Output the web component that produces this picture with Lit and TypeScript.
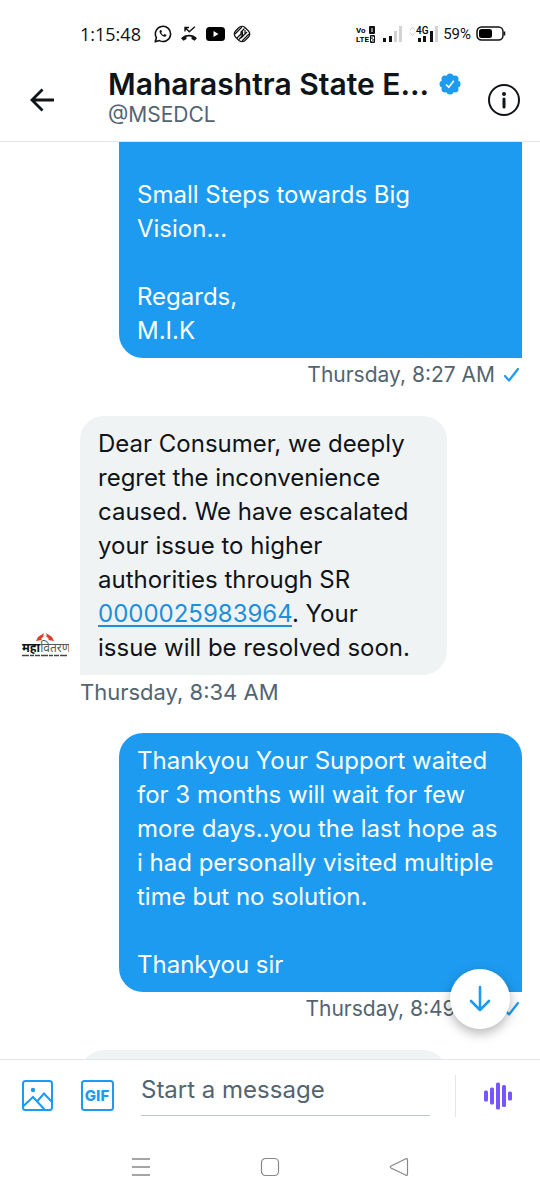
import { LitElement, html, css, svg, nothing } from 'lit';
import { customElement, property, state } from 'lit/decorators.js';
import { classMap } from 'lit/directives/class-map.js';

interface Message {
  own: boolean;
  lines: string[];
  time: string;
}

const MESSAGES: Message[] = [
  {
    own: true,
    lines: ['', 'Small Steps towards Big', 'Vision...', '', 'Regards,', 'M.I.K'],
    time: 'Thursday, 8:27 AM',
  },
  {
    own: false,
    lines: [
      'Dear Consumer, we deeply',
      'regret the inconvenience',
      'caused. We have escalated',
      'your issue to higher',
      'authorities through SR',
      '0000025983964. Your',
      'issue will be resolved soon.',
    ],
    time: 'Thursday, 8:34 AM',
  },
  {
    own: true,
    lines: [
      'Thankyou Your Support waited',
      'for 3 months will wait for few',
      'more days..you the last hope as',
      'i had personally visited multiple',
      'time but no solution.',
      '',
      'Thankyou sir',
    ],
    time: 'Thursday, 8:49 AM',
  },
];

@customElement('status-bar')
class StatusBar extends LitElement {
  static styles = css`
    :host {
      display: flex;
      align-items: center;
      justify-content: space-between;
      height: 68px;
      padding: 0 34px 0 80px;
      box-sizing: border-box;
      font-family: 'Open Sans', sans-serif;
      color: #111;
    }

    .group {
      display: flex;
      align-items: center;
      gap: 8px;
    }

    .group.right {
      gap: 6px;
    }

    .time {
      font-size: 18px;
      margin-right: 5px;
    }

    .percent {
      font-family: Roboto, sans-serif;
      font-size: 15px;
      margin: 0 -1px;
    }

    svg {
      display: block;
    }

    .tiny {
      font: 700 8px Roboto, sans-serif;
    }

    .net {
      font: 500 10px Roboto, sans-serif;
    }
  `;

  render() {
    return html`
      <div class="group">
        <span class="time">1:15:48</span>
        <svg width="18" height="18" viewBox="0 0 18 18" fill="none" stroke="#111" stroke-width="1.6">
          <path d="M1.2 16.8l1.2-4.1a7.6 7.6 0 1 1 3 2.9z" stroke-linejoin="round" />
          <path d="M6 5.2c-1 1-.4 2.8 1.2 4.5s3.6 2.6 4.9 1.5l.4-1.1-1.9-1-1 .9c-1.2-.5-1.9-1.2-2.4-2.3l.8-.9-.8-1.8z" fill="#111" stroke="none" />
        </svg>
        <svg width="18" height="16" viewBox="0 0 18 16" fill="none" stroke="#111">
          <path d="M5 5.5v-4h4M5.3 1.8l4 4 5.5-5" stroke-width="1.4" />
          <path d="M1 12.2c4-4.6 12-4.6 16 0l-2.5 2.6-3-1.9v-2.1a9 9 0 0 0-5 0v2.1l-3 1.9z" fill="#111" stroke="none" />
        </svg>
        <svg width="19" height="14" viewBox="0 0 19 14">
          <rect width="19" height="14" rx="3.5" fill="#000" />
          <path d="M7.5 4v6l5-3z" fill="#fff" />
        </svg>
        <svg width="18" height="18" viewBox="0 0 18 18" fill="none" stroke="#111" stroke-width="1.2">
          <path d="M6 2.5q3-2.5 6 0l3.5 3.5q2.5 3 0 6L12 15.5q-3 2.5-6 0L2.5 12q-2.5-3 0-6z" />
          <path d="M9 2L2 9M11.5 3.5L8 7v3.5M4 13l5.5-5.500v3L6 14.5M12 5v4l2-2M9 16l7-7M12 9l-4 4" />
        </svg>
      </div>
      <div class="group right">
        <svg width="20" height="17" viewBox="0 0 20 17">
          <text class="tiny" x="0" y="7">Vo</text>
          <text class="tiny" x="0" y="16">LTE</text>
          <rect x="13" y="0" width="6" height="8" rx="1" fill="#111" />
          <rect x="14" y="9" width="5" height="8" rx="1" fill="#111" />
          <path d="M16 2v4M15 11h2.5v2h-2v2h2.5" stroke="#fff" fill="none" />
        </svg>
        <svg width="21" height="16" viewBox="0 0 21 16">
          <path d="M1 12h3v4H1zM7 10h3v6H7z" fill="#111" />
          <path d="M12 5h3v11h-3zM17 0h3v16h-3z" fill="#d3d3d3" />
        </svg>
        <svg width="29" height="18" viewBox="0 0 29 18">
          <path d="M1 5l2.5-3L6 5M1 7.5l2.5 3 2.5-3" fill="none" stroke="#ccc" />
          <text class="net" x="7" y="9">4G</text>
          <path d="M9 13h3v4H9zM14 11h3v6h-3zM21 6h3v11h-3z" fill="#111" />
          <path d="M26 1h3v16h-3z" fill="#d3d3d3" />
        </svg>
        <span class="percent">59%</span>
        <svg width="30" height="16" viewBox="0 0 30 16">
          <rect x="1" y="1" width="26" height="13" rx="4.5" fill="none" stroke="#111" stroke-width="1.5" />
          <rect x="3" y="3" width="13" height="9" rx="2.5" fill="#000" />
          <path d="M28.5 5.5v4" stroke="#111" stroke-width="1.5" />
        </svg>
      </div>
    `;
  }
}

@customElement('chat-message')
class ChatMessage extends LitElement {
  @property({ attribute: false }) message!: Message;
  @property({ type: Boolean }) clipped = false;

  static styles = css`
    :host {
      display: block;
    }

    .row {
      display: flex;
      align-items: flex-end;
      gap: 11px;
      padding: 0 93px 0 21px;
    }

    .row.own {
      padding: 0 18px 0 119px;
    }

    .avatar {
      flex: none;
      width: 48px;
      height: 48px;
    }

    .bubble {
      flex: 1;
      min-width: 0;
      padding: 11px 0 10px 18px;
      border-radius: 24px 24px 24px 0;
      background: #eff3f4;
      color: #0f1419;
      font-size: 24px;
      line-height: 34px;
    }

    .own .bubble {
      border-radius: 24px 24px 0 24px;
      background: #1d9bf0;
      color: #fff;
    }

    .clipped .bubble {
      border-top-left-radius: 0;
      border-top-right-radius: 0;
      padding-top: 2px;
    }

    .line {
      min-height: 34px;
    }

    .bubble a {
      color: #1d8fdd;
      text-underline-offset: 3px;
    }

    .meta {
      display: flex;
      align-items: center;
      gap: 8px;
      padding: 0 93px 24px 80px;
      font-size: 22px;
      line-height: 34px;
      color: #536471;
    }

    .meta.own {
      justify-content: flex-end;
      padding-left: 119px;
      padding-right: 20px;
      font-size: 21px;
    }

    .brand {
      font: 700 12px 'Noto Sans', 'Noto Sans Devanagari', sans-serif;
    }

    .brand-light {
      font-weight: 400;
    }
  `;

  renderLine(line: string) {
    const match = line.match(/\d{13}/);
    if (!match) {
      return line;
    }
    const [before, after] = line.split(match[0]);
    return html`${before}<a href="#sr">${match[0]}</a>${after}`;
  }

  renderAvatar() {
    return html`
      <svg class="avatar" viewBox="0 0 48 48" role="img" aria-label="MSEDCL">
        <path d="M15 14l2-4 6-4-1 3 2-1-4 4 1 1zM33 14l-2-4-6-4 1 3-2-1 4 4-1 1z" fill="#d8402c" />
        <text class="brand" x="1" y="25" fill="#111">महा<tspan class="brand-light" fill="#555">वितरण</tspan></text>
        <path d="M1 28.5h46" stroke="#444" stroke-width="1.5" stroke-dasharray="7 1 4 1 5 1" />
      </svg>
    `;
  }

  render() {
    const { own, lines, time } = this.message;
    return html`
      <div class=${classMap({ row: true, own, clipped: this.clipped })}>
        ${own ? nothing : this.renderAvatar()}
        <div class="bubble">
          ${lines.map((line) => html`<div class="line">${this.renderLine(line)}</div>`)}
        </div>
      </div>
      <div class=${classMap({ meta: true, own })}>
        <span>${time}</span>
        ${own
          ? html`<svg width="17" height="16" viewBox="0 0 17 16" fill="none" stroke="#1d9bf0" stroke-width="2.2">
              <path d="M2 9l4 4.5L15 2" stroke-linecap="round" stroke-linejoin="round" />
            </svg>`
          : nothing}
      </div>
    `;
  }
}

@customElement('app-root')
class AppRoot extends LitElement {
  @state() draft = '';

  static styles = css`
    :host {
      display: flex;
      flex-direction: column;
      height: 100vh;
      background: #fff;
      font-family: Inter, 'Liberation Sans', sans-serif;
      color: #0f1419;
    }

    button {
      display: flex;
      align-items: center;
      justify-content: center;
      padding: 0;
      border: 0;
      background: none;
      color: inherit;
      cursor: pointer;
    }

    header {
      display: flex;
      align-items: center;
      height: 74px;
      padding: 0 18px 10px 28px;
      box-sizing: border-box;
      border-bottom: 1px solid #e3e6e8;
    }

    .who {
      flex: 1;
      min-width: 0;
      padding: 0 0 6px 52px;
    }

    .title {
      display: flex;
      align-items: center;
      gap: 10px;
    }

    h1 {
      margin: 0;
      font-size: 30px;
      line-height: 36px;
      font-weight: 600;
      white-space: nowrap;
    }

    .handle {
      font-size: 21px;
      line-height: 26px;
      color: #536471;
    }

    main {
      position: relative;
      flex: 1;
      min-height: 0;
    }

    .messages {
      height: 100%;
      overflow: hidden;
    }

    .next {
      height: 60px;
      margin: 0 93px 0 80px;
      border-radius: 24px 24px 24px 0;
      background: #eff3f4;
    }

    .jump {
      position: absolute;
      right: 30px;
      bottom: 30px;
      width: 60px;
      height: 60px;
      border-radius: 50%;
      background: #fff;
      box-shadow: 0 4px 12px rgba(0, 0, 0, 0.3);
    }

    .composer {
      display: flex;
      align-items: center;
      height: 75px;
      padding: 0 28px 3px 22px;
      box-sizing: border-box;
      border-top: 1px solid #e3e6e8;
    }

    .tools {
      display: flex;
      gap: 28px;
    }

    .gif {
      font: 800 15px Inter, sans-serif;
    }

    input {
      flex: 1;
      min-width: 0;
      height: 52px;
      margin: 0 25px 12px 27px;
      padding: 0;
      box-sizing: border-box;
      border: 0;
      border-bottom: 1px solid #bcc6cd;
      outline: none;
      background: none;
      font: 24px Inter, sans-serif;
      color: inherit;
    }

    input::placeholder {
      color: #536471;
      opacity: 1;
    }

    .voice {
      height: 42px;
      padding-left: 28px;
      border-left: 1px solid #e3e6e8;
    }

    nav {
      display: flex;
      align-items: center;
      justify-content: center;
      gap: 109px;
      height: 66px;
    }
  `;

  onInput(e: Event) {
    this.draft = (e.target as HTMLInputElement).value;
  }

  renderVoiceBars() {
    const bars = [
      [2, 11],
      [8, 17],
      [14, 27],
      [20, 22],
      [26, 9],
    ];
    return bars.map(
      ([x, h]) => svg`<rect x=${x - 2} y=${14 - h / 2} width="4" height=${h} rx="1.5" fill="#7856ff" />`
    );
  }

  render() {
    return html`
      <status-bar></status-bar>
      <header>
        <button aria-label="Back">
          <svg width="28" height="28" viewBox="0 0 28 28" fill="none" stroke="#0f1419" stroke-width="2.8">
            <path d="M26 14H4M14.5 3.5L4 14l10.5 10.5" />
          </svg>
        </button>
        <div class="who">
          <div class="title">
            <h1>Maharashtra State E...</h1>
            <svg width="22" height="22" viewBox="0 0 22 22" role="img" aria-label="Verified">
              <g fill="#1d9bf0">
                <circle cx="11" cy="11" r="8.5" />
                <circle cx="11" cy="4" r="3.5" />
                <circle cx="16" cy="6" r="3.5" />
                <circle cx="18" cy="11" r="3.5" />
                <circle cx="16" cy="16" r="3.5" />
                <circle cx="11" cy="18" r="3.5" />
                <circle cx="6" cy="16" r="3.5" />
                <circle cx="4" cy="11" r="3.5" />
                <circle cx="6" cy="6" r="3.5" />
              </g>
              <path d="M7 11.5l2.8 2.7 5-6.5" fill="none" stroke="#fff" stroke-width="1.6" />
            </svg>
          </div>
          <div class="handle">@MSEDCL</div>
        </div>
        <button aria-label="Conversation info">
          <svg width="36" height="36" viewBox="0 0 36 36" fill="none" stroke="#0f1419">
            <circle cx="18" cy="18" r="15" stroke-width="2" />
            <circle cx="18" cy="12" r="2" fill="#0f1419" stroke="none" />
            <path d="M18 17v8" stroke-width="3" stroke-linecap="round" />
          </svg>
        </button>
      </header>
      <main>
        <div class="messages">
          ${MESSAGES.map(
            (message, index) => html`
              <chat-message .message=${message} ?clipped=${index === 0}></chat-message>
            `
          )}
          <div class="next"></div>
        </div>
        <button class="jump" aria-label="Scroll to latest">
          <svg width="24" height="28" viewBox="0 0 24 28" fill="none" stroke="#1d9bf0" stroke-width="2.6">
            <path d="M12 2v23M3 16l9 9 9-9" stroke-linecap="round" stroke-linejoin="round" />
          </svg>
        </button>
      </main>
      <div class="composer">
        <div class="tools">
          <button aria-label="Add photo">
            <svg width="31" height="31" viewBox="0 0 31 31" fill="none" stroke="#1d9bf0" stroke-width="2">
              <rect x="1" y="1" width="29" height="29" rx="2.5" />
              <circle cx="11" cy="10" r="2.2" fill="#1d9bf0" stroke="none" />
              <path d="M1.5 26L11 17l11.5 12.5M15 21.5l7-8 8 8.5" />
            </svg>
          </button>
          <button aria-label="Add GIF">
            <svg width="33" height="31" viewBox="0 0 33 31">
              <rect x="1" y="1" width="31" height="29" rx="2.5" fill="none" stroke="#1d9bf0" stroke-width="2" />
              <text class="gif" x="16" y="21" text-anchor="middle" fill="#1d9bf0">GIF</text>
            </svg>
          </button>
        </div>
        <input
          type="text"
          aria-label="Start a message"
          placeholder="Start a message"
          .value=${this.draft}
          @input=${this.onInput}
        />
        <button class="voice" aria-label="Record voice message">
          <svg width="28" height="28" viewBox="0 0 28 28">${this.renderVoiceBars()}</svg>
        </button>
      </div>
      <nav>
        <button aria-label="Recent apps">
          <svg width="20" height="20" viewBox="0 0 20 20" stroke="#888" stroke-width="1.5">
            <path d="M1 2h18M1 10h18M1 18h18" />
          </svg>
        </button>
        <button aria-label="Home">
          <svg width="20" height="20" viewBox="0 0 20 20" fill="none" stroke="#888" stroke-width="1.2">
            <rect x="1.5" y="1.5" width="17" height="17" rx="4" />
          </svg>
        </button>
        <button aria-label="Back">
          <svg width="20" height="20" viewBox="0 0 20 20" fill="none" stroke="#888" stroke-width="1.2">
            <path d="M17 1.7L2 9q-1.5 1 0 2l15 7.3q1.5.3 1.5-1V2.7q0-1.3-1.5-1z" />
          </svg>
        </button>
      </nav>
    `;
  }
}
